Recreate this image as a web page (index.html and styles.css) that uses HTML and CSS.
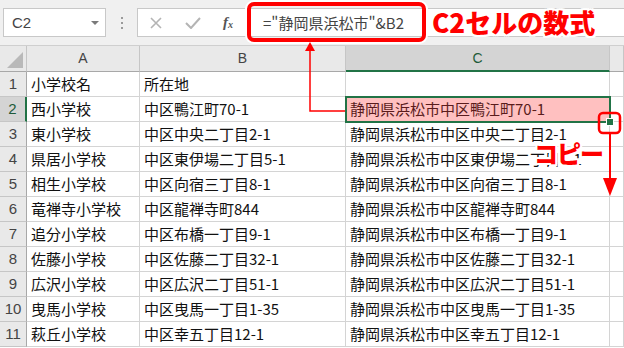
FILE: index.html
```html
<!DOCTYPE html>
<html lang="ja">
<head>
    <meta charset="UTF-8">
    <title>C2セルの数式</title>
    <link rel="stylesheet" href="styles.css">
</head>
<body>
<div class="screen">

    <div class="toolbar">
        <div class="name-box">
            <span>C2</span>
            <span class="drop"></span>
        </div>
        <div class="grip"><i></i><i></i><i></i></div>
        <div class="formula-box">
            <div class="fx-icons">
                <svg class="ico" width="12" height="12" viewBox="0 0 12 12"><path d="M1 1 L11 11 M11 1 L1 11" stroke="#b4b4b4" stroke-width="1.6" fill="none"/></svg>
                <svg class="ico" width="16" height="12" viewBox="0 0 16 12"><path d="M1 6 L6 11 L15 1" stroke="#b4b4b4" stroke-width="2" fill="none"/></svg>
                <span class="fx">f<sub>x</sub></span>
            </div>
            <div class="formula-text">=&quot;静岡県浜松市&quot;&amp;B2</div>
        </div>
    </div>

    <div class="sheet">
        <div class="hd corner"><span class="tri"></span></div>
        <div class="hd">A</div>
        <div class="hd">B</div>
        <div class="hd sel-col">C</div>
        <div class="hd"></div>

        <div class="rh">1</div><div class="c">小学校名</div><div class="c">所在地</div><div class="c"></div><div class="c"></div>
        <div class="rh sel-row">2</div><div class="c">西小学校</div><div class="c">中区鴨江町70-1</div><div class="c active">静岡県浜松市中区鴨江町70-1</div><div class="c"></div>
        <div class="rh">3</div><div class="c">東小学校</div><div class="c">中区中央二丁目2-1</div><div class="c">静岡県浜松市中区中央二丁目2-1</div><div class="c"></div>
        <div class="rh">4</div><div class="c">県居小学校</div><div class="c">中区東伊場二丁目5-1</div><div class="c">静岡県浜松市中区東伊場二丁目5-1</div><div class="c"></div>
        <div class="rh">5</div><div class="c">相生小学校</div><div class="c">中区向宿三丁目8-1</div><div class="c">静岡県浜松市中区向宿三丁目8-1</div><div class="c"></div>
        <div class="rh">6</div><div class="c">竜禅寺小学校</div><div class="c">中区龍禅寺町844</div><div class="c">静岡県浜松市中区龍禅寺町844</div><div class="c"></div>
        <div class="rh">7</div><div class="c">追分小学校</div><div class="c">中区布橋一丁目9-1</div><div class="c">静岡県浜松市中区布橋一丁目9-1</div><div class="c"></div>
        <div class="rh">8</div><div class="c">佐藤小学校</div><div class="c">中区佐藤二丁目32-1</div><div class="c">静岡県浜松市中区佐藤二丁目32-1</div><div class="c"></div>
        <div class="rh">9</div><div class="c">広沢小学校</div><div class="c">中区広沢二丁目51-1</div><div class="c">静岡県浜松市中区広沢二丁目51-1</div><div class="c"></div>
        <div class="rh">10</div><div class="c">曳馬小学校</div><div class="c">中区曳馬一丁目1-35</div><div class="c">静岡県浜松市中区曳馬一丁目1-35</div><div class="c"></div>
        <div class="rh">11</div><div class="c">萩丘小学校</div><div class="c">中区幸五丁目12-1</div><div class="c">静岡県浜松市中区幸五丁目12-1</div><div class="c"></div>
    </div>

    <!-- annotations -->
    <div class="mark-formula"></div>
    <div class="label label-formula">C2セルの数式</div>
    <div class="label label-copy">コピー</div>
    <svg class="arrows" width="624" height="348" viewBox="0 0 624 348">
        <path d="M310 48 V111 H345" stroke="#ff0000" stroke-width="1.5" fill="none"/>
        <polygon points="305,51 315,51 310,42" fill="#ff0000"/>
        <rect x="599" y="113" width="21" height="20" rx="4" stroke="#ff0000" stroke-width="2.5" fill="none"/>
        <path d="M610 133 V180" stroke="#ff0000" stroke-width="2" fill="none"/>
        <polygon points="603,178 617,178 610,196" fill="#ff0000"/>
    </svg>

</div>
</body>
</html>
```

FILE: styles.css
```css
body {
    margin: 0;
    background: #fff;
    font-family: "Noto Sans CJK JP", sans-serif;
}
.screen {
    position: relative;
    width: 624px;
    height: 348px;
    overflow: hidden;
}

/* formula bar */
.toolbar {
    height: 46px;
    border-bottom: 1px solid #cfcfcf;
    background: #f0f0f0;
    display: flex;
    align-items: flex-start;
    padding: 8px 0 0 3px;
    box-sizing: border-box;
}
.name-box {
    width: 103px;
    height: 29px;
    box-sizing: border-box;
    border: 1px solid #c8c8c8;
    background: #fff;
    display: flex;
    align-items: center;
    justify-content: space-between;
    padding: 0 6px 0 8px;
    font-family: "Liberation Sans", sans-serif;
    font-size: 15px;
    color: #444;
}
.drop {
    width: 0;
    height: 0;
    border-left: 4px solid transparent;
    border-right: 4px solid transparent;
    border-top: 4px solid #7a7a7a;
}
.grip {
    width: 31px;
    height: 29px;
    display: flex;
    flex-direction: column;
    align-items: center;
    justify-content: center;
    gap: 3px;
}
.grip i {
    width: 2px;
    height: 2px;
    background: #9a9a9a;
}
.formula-box {
    flex: 1;
    height: 29px;
    box-sizing: border-box;
    border: 1px solid #c8c8c8;
    border-right: none;
    background: #fff;
    display: flex;
    align-items: center;
}
.fx-icons {
    width: 109px;
    display: flex;
    align-items: center;
    padding-left: 12px;
    box-sizing: border-box;
}
.fx-icons .ico {
    margin-right: 23px;
}
.fx-icons .ico + .ico {
    margin-right: 22px;
}
.fx {
    font-family: "Liberation Serif", serif;
    font-style: italic;
    font-size: 15px;
    color: #555;
    font-weight: bold;
}
.fx sub {
    font-size: 10px;
    vertical-align: -1px;
}
.formula-text {
    padding-left: 16px;
    font-size: 15px;
    color: #444;
}

/* sheet grid */
.sheet {
    display: grid;
    grid-template-columns: 27px 113px 206px 264px 14px;
    grid-template-rows: 26px;
    grid-auto-rows: 25px;
    font-size: 15px;
}
.hd {
    background: #e9e9e9;
    border-right: 1px solid #c6c6c6;
    border-bottom: 1px solid #a8a8a8;
    box-sizing: border-box;
    text-align: center;
    line-height: 25px;
    font-family: "Liberation Sans", sans-serif;
    font-size: 14px;
    color: #444;
}
.corner {
    position: relative;
}
.tri {
    position: absolute;
    right: 3px;
    bottom: 3px;
    width: 0;
    height: 0;
    border-left: 16px solid transparent;
    border-bottom: 16px solid #b9b9b9;
}
.sel-col {
    background: #d4d4d4;
    border-bottom: 2px solid #217346;
    color: #1e5b3a;
}
.rh {
    background: #e9e9e9;
    border-right: 1px solid #a8a8a8;
    border-bottom: 1px solid #c6c6c6;
    box-sizing: border-box;
    text-align: center;
    line-height: 24px;
    font-family: "Liberation Sans", sans-serif;
    color: #444;
}
.sel-row {
    background: #d4d4d4;
    border-right: 2px solid #217346;
    color: #1e5b3a;
}
.c {
    border-right: 1px solid #d4d4d4;
    border-bottom: 1px solid #d4d4d4;
    box-sizing: border-box;
    padding-left: 4px;
    line-height: 24px;
    white-space: nowrap;
    overflow: hidden;
    color: #111;
}
.c.active {
    position: relative;
    overflow: visible;
    z-index: 1;
    background: #ffc0c0;
    color: #5a1c1c;
    outline: 2px solid #217346;
    outline-offset: -1px;
}
.c.active::after {
    content: "";
    position: absolute;
    right: -5px;
    bottom: -5px;
    width: 6px;
    height: 6px;
    background: #217346;
    border: 1px solid #fff;
}

/* annotations */
.mark-formula {
    position: absolute;
    left: 247px;
    top: 2px;
    width: 179px;
    height: 40px;
    box-sizing: border-box;
    border: 4px solid #ff0000;
    border-radius: 7px;
    box-shadow: 0 0 0 2px #fff;
}
.label {
    position: absolute;
    color: #ff0000;
    font-weight: 900;
    white-space: nowrap;
    text-shadow: 2px 0 #fff, -2px 0 #fff, 0 2px #fff, 0 -2px #fff,
        2px 2px #fff, -2px -2px #fff, 2px -2px #fff, -2px 2px #fff;
    z-index: 4;
}
.label-formula {
    left: 432px;
    top: 4px;
    font-size: 26px;
    line-height: 36px;
}
.label-copy {
    left: 534px;
    top: 136px;
    font-size: 24px;
    line-height: 34px;
    letter-spacing: -1px;
}
.arrows {
    position: absolute;
    left: 0;
    top: 0;
    z-index: 5;
}
```
